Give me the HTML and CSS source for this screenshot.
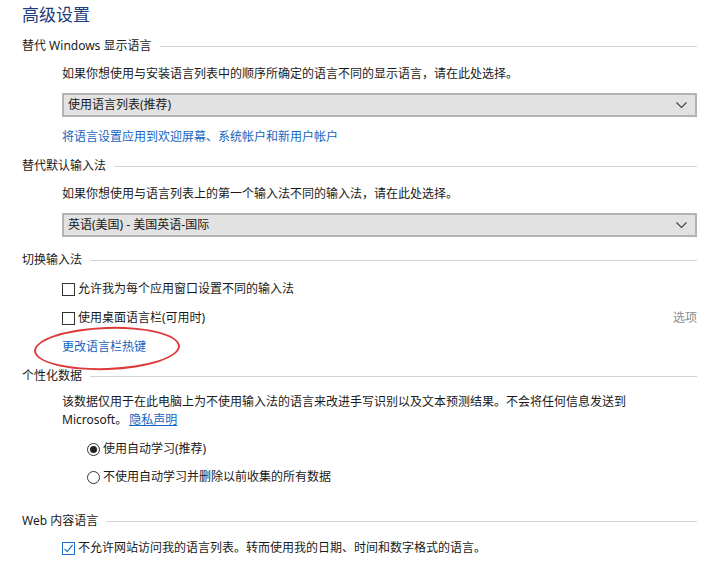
FILE: index.html
```html
<!DOCTYPE html>
<html lang="zh-CN">
<head>
    <meta charset="UTF-8">
    <title>高级设置</title>
    <link rel="stylesheet" href="styles.css">
</head>
<body>

    <h1 class="page-title">高级设置</h1>

    <!-- 显示语言 -->
    <div class="group">
        <h2 class="group-title">替代 Windows 显示语言</h2>
        <div class="group-body">
            <p class="desc">如果你想使用与安装语言列表中的顺序所确定的语言不同的显示语言，请在此处选择。</p>
            <div class="dropdown">
                <span>使用语言列表(推荐)</span>
                <svg class="chevron" width="11" height="6" viewBox="0 0 11 6"><path d="M0.5 0.5 L5.5 5.5 L10.5 0.5" fill="none" stroke="#444" stroke-width="1.1"/></svg>
            </div>
            <a class="link" href="#">将语言设置应用到欢迎屏幕、系统帐户和新用户帐户</a>
        </div>
    </div>

    <!-- 默认输入法 -->
    <div class="group">
        <h2 class="group-title">替代默认输入法</h2>
        <div class="group-body">
            <p class="desc">如果你想使用与语言列表上的第一个输入法不同的输入法，请在此处选择。</p>
            <div class="dropdown">
                <span>英语(美国) - 美国英语-国际</span>
                <svg class="chevron" width="11" height="6" viewBox="0 0 11 6"><path d="M0.5 0.5 L5.5 5.5 L10.5 0.5" fill="none" stroke="#444" stroke-width="1.1"/></svg>
            </div>
        </div>
    </div>

    <!-- 切换输入法 -->
    <div class="group group-switch">
        <h2 class="group-title">切换输入法</h2>
        <div class="group-body">
            <label class="check-row"><span class="checkbox"></span>允许我为每个应用窗口设置不同的输入法</label>
            <div class="check-row spread">
                <label class="check-row"><span class="checkbox"></span>使用桌面语言栏(可用时)</label>
                <span class="muted">选项</span>
            </div>
            <div class="hotkey">
                <a class="link" href="#">更改语言栏热键</a>
                <span class="ring"></span>
            </div>
        </div>
    </div>

    <!-- 个性化数据 -->
    <div class="group">
        <h2 class="group-title">个性化数据</h2>
        <div class="group-body">
            <p class="desc wrap">该数据仅用于在此电脑上为不使用输入法的语言来改进手写识别以及文本预测结果。不会将任何信息发送到 Microsoft。<a class="link underline" href="#">隐私声明</a></p>
            <div class="radios">
                <label class="radio-row"><span class="radio on"></span>使用自动学习(推荐)</label>
                <label class="radio-row"><span class="radio"></span>不使用自动学习并删除以前收集的所有数据</label>
            </div>
        </div>
    </div>

    <!-- Web 内容语言 -->
    <div class="group group-web">
        <h2 class="group-title">Web 内容语言</h2>
        <div class="group-body">
            <label class="check-row"><span class="checkbox checked">
                <svg width="11" height="11" viewBox="0 0 11 11"><path d="M1.5 5.8 L4.3 8.6 L9.6 1.8" fill="none" stroke="#1f6fc5" stroke-width="1.2"/></svg>
            </span>不允许网站访问我的语言列表。转而使用我的日期、时间和数字格式的语言。</label>
        </div>
    </div>

</body>
</html>
```

FILE: styles.css
```css
body {
    margin: 0;
    padding: 4px 16px 0 22px;
    font-family: "Noto Sans", "Noto Sans CJK SC", sans-serif;
    font-size: 12px;
    line-height: 18px;
    color: #1a1a1a;
    background: #fff;
}

.page-title {
    margin: 0;
    font-size: 17px;
    line-height: 22px;
    font-weight: normal;
    color: #1f3d7a;
}

.group {
    margin-top: 11px;
}

.group-title {
    display: flex;
    align-items: center;
    margin: 0;
    font-size: 12px;
    line-height: 18px;
    font-weight: normal;
}

.group-title::after {
    content: "";
    flex: 1;
    height: 1px;
    margin-left: 8px;
    background: #d4d4d4;
}

.group-body {
    display: flex;
    flex-direction: column;
    padding-left: 40px;
}

.desc {
    margin: 10px 0 0 0;
}

.desc.wrap {
    margin-top: 8px;
    padding-right: 70px;
}

.dropdown {
    display: flex;
    align-items: center;
    justify-content: space-between;
    height: 20px;
    margin-top: 10px;
    padding: 0 8px 0 4px;
    background: #e2e2e2;
    border: 2px solid #b3b3b3;
}

.chevron {
    display: block;
}

.link {
    color: #1565c0;
    text-decoration: none;
    margin-top: 11px;
    align-self: flex-start;
}

.link.underline {
    text-decoration: underline;
    margin: 0 0 0 2px;
}

.group-switch {
    margin-top: 14px;
}

.check-row {
    display: flex;
    align-items: center;
    margin-top: 11px;
}

.check-row .check-row {
    margin-top: 0;
}

.spread {
    justify-content: space-between;
}

.muted {
    color: #8c8c8c;
}

.checkbox {
    box-sizing: border-box;
    width: 13px;
    height: 13px;
    margin-right: 3px;
    border: 1px solid #333;
    display: flex;
    align-items: center;
    justify-content: center;
}

.checkbox.checked {
    border-color: #1f6fc5;
}

.hotkey {
    position: relative;
    margin-top: 11px;
}

.hotkey .link {
    display: inline-block;
    margin-top: 0;
}

/* hand-drawn red circle round the hotkey link */
.ring {
    position: absolute;
    left: -28px;
    top: -11px;
    width: 146px;
    height: 43px;
    border: 2px solid #dd3b3b;
    border-radius: 50%;
    transform: rotate(-2deg);
    box-sizing: border-box;
    pointer-events: none;
}

.radios {
    display: flex;
    flex-direction: column;
    gap: 10px;
    margin-top: 11px;
    padding-left: 25px;
}

.radio-row {
    display: flex;
    align-items: center;
}

.radio {
    box-sizing: border-box;
    width: 13px;
    height: 13px;
    margin-right: 3px;
    border: 1px solid #333;
    border-radius: 50%;
    display: flex;
    align-items: center;
    justify-content: center;
}

.radio.on::after {
    content: "";
    width: 7px;
    height: 7px;
    border-radius: 50%;
    background: #222;
}

.group-web {
    margin-top: 26px;
}

.group-web .check-row {
    margin-top: 9px;
}
```
